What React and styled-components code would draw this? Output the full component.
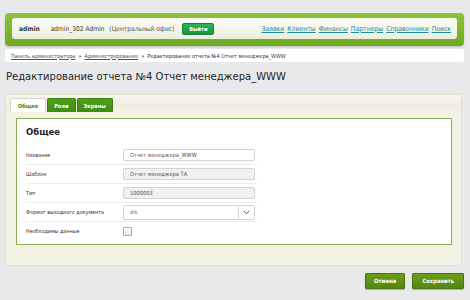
import React from 'react';
import styled, { createGlobalStyle } from 'styled-components';

const Global = createGlobalStyle`
  html, body {
    margin: 0;
    padding: 0;
    background: #e8e9eb;
    font-family: "DejaVu Sans Condensed", "DejaVu Sans", Verdana, sans-serif;
    color: #222;
  }
`;

const Page = styled.div`
  width: 470px;
  height: 300px;
  overflow: hidden;
  padding: 13px 6px 0 5px;
  box-sizing: border-box;
  background: #e8e9eb;
`;

const Header = styled.div`
  height: 33px;
  box-sizing: border-box;
  padding: 5px 7px 0 7px;
  background: linear-gradient(#8cc43a, #6fa823);
  border-radius: 4px;
  box-shadow: 0 1px 2px rgba(0, 0, 0, 0.2);
`;

const HeaderInner = styled.div`
  height: 21px;
  display: flex;
  align-items: center;
  padding: 0 6px 0 7px;
  border-radius: 3px;
  background: linear-gradient(#fdfdf8, #eaeedd);
  font-size: 6.6px;
  color: #3a3a1a;
`;

const User = styled.span`
  font-weight: bold;
  margin-right: 11px;
`;

const Office = styled.span`
  margin-left: 5px;
  color: #555;
`;

const LogoutButton = styled.button`
  margin-left: 8px;
  height: 12px;
  width: 32px;
  padding: 0;
  border: 1px solid #168238;
  border-radius: 2px;
  background: linear-gradient(#2fb457, #1b963f);
  color: #fff;
  font-family: inherit;
  font-size: 5.6px;
  font-weight: bold;
`;

const Nav = styled.nav`
  margin-left: auto;
  display: flex;
  gap: 3px;
`;

const NavLink = styled.a`
  color: #1c8c9c;
  text-decoration: underline;
  font-size: 6.8px;
`;

const Crumbs = styled.div`
  margin-top: 3px;
  height: 13px;
  display: flex;
  align-items: center;
  gap: 3px;
  padding-left: 6px;
  background: #fff;
  border-radius: 2px;
  font-size: 5.5px;
  color: #333;
`;

const Crumb = styled.a`
  color: #555;
  text-decoration: underline;
`;

const Title = styled.h1`
  margin: 9px 0 0 1px;
  height: 22px;
  font-family: "DejaVu Sans", Verdana, sans-serif;
  font-size: 10px;
  font-weight: normal;
  color: #1f1f1f;
`;

const Panel = styled.div`
  margin-top: 1px;
  width: 457px;
  height: 172px;
  box-sizing: border-box;
  background: #f3f1e3;
  border: 1px solid #e2dfca;
  border-radius: 3px;
`;

const TabBar = styled.div`
  display: flex;
  gap: 1px;
  padding: 3px 4px 0;
  height: 16px;
  box-sizing: border-box;
  background: linear-gradient(#f7f6ee 0, #efede0 70%, #f3f1e3 100%);
`;

const Tab = styled.div`
  height: 13px;
  padding: 0 ${p => (p.$active ? 7 : 6)}px;
  display: flex;
  align-items: center;
  font-size: 5.6px;
  font-weight: bold;
  border-radius: 2px 2px 0 0;
  color: ${p => (p.$active ? '#4d8a12' : '#fff')};
  background: ${p => (p.$active ? '#fff' : 'linear-gradient(#4ea11a, #3d8c10)')};
  border: 1px solid ${p => (p.$active ? '#d9d6c2' : '#3a7d0f')};
  border-bottom: none;
`;

const Content = styled.div`
  margin: 7px 9px 0 10px;
  height: 127px;
  box-sizing: border-box;
  background: #fff;
  border: 1px solid #8cad5a;
  padding: 8px 0 0 9px;
`;

const Heading = styled.h2`
  margin: 0 0 8px;
  font-family: "DejaVu Sans", Verdana, sans-serif;
  font-size: 8.5px;
  font-weight: bold;
  color: #222;
`;

const Row = styled.div`
  display: flex;
  align-items: center;
  width: 231px;
  height: 19px;
  border-top: 1px solid ${p => (p.$first ? 'transparent' : '#ececec')};
  box-sizing: border-box;
`;

const Label = styled.div`
  width: 97px;
  font-size: 5.4px;
  color: #333;
`;

const Field = styled.div`
  width: 132px;
  height: 12px;
  box-sizing: border-box;
  display: flex;
  align-items: center;
  padding-left: 6px;
  border: 1px solid #d3d3d3;
  border-radius: 2px;
  background: ${p => (p.$disabled ? '#f1f1f1' : '#fff')};
  font-size: 5.7px;
  color: #555;
`;

const Select = styled(Field)`
  height: 15px;
  padding-right: 0;
`;

const Arrow = styled.div`
  margin-left: auto;
  width: 15px;
  height: 100%;
  border-left: 1px solid #d3d3d3;
  display: flex;
  align-items: center;
  justify-content: center;
`;

const Check = styled.div`
  width: 7px;
  height: 7px;
  border: 1px solid #aaa;
  border-radius: 1px;
  background: linear-gradient(#fff, #e6e6e6);
`;

const Actions = styled.div`
  display: flex;
  justify-content: flex-end;
  gap: 7px;
  margin-top: 7px;
  width: 459px;
`;

const Button = styled.button`
  height: 16px;
  padding: 0 ${p => p.$pad}px;
  border: 1px solid #4a720c;
  border-radius: 1px;
  background: linear-gradient(#6b9c1a, #578612);
  color: #fff;
  font-family: inherit;
  font-size: 5.8px;
  font-weight: bold;
  box-shadow: 0 1px 1px rgba(0, 0, 0, 0.25);
`;

const fields = [
  { label: 'Название', value: 'Отчет менеджера_WWW' },
  { label: 'Шаблон', value: 'Отчет менеджера ТА', disabled: true },
  { label: 'Тип', value: '1000003', disabled: true },
];

export default function App() {
  return (
    <Page>
      <Global />
      <Header>
        <HeaderInner>
          <User>admin</User>
          <span>admin_302 Admin</span>
          <Office>(Центральный офис)</Office>
          <LogoutButton type="button">Выйти</LogoutButton>
          <Nav>
            {['Заявки', 'Клиенты', 'Финансы', 'Партнеры', 'Справочники', 'Поиск'].map(l => (
              <NavLink key={l}>{l}</NavLink>
            ))}
          </Nav>
        </HeaderInner>
      </Header>
      <Crumbs>
        <Crumb>Панель администратора</Crumb>
        <span>»</span>
        <Crumb>Администрирование</Crumb>
        <span>»</span>
        <span>Редактирование отчета №4 Отчет менеджера_WWW</span>
      </Crumbs>
      <Title>Редактирование отчета №4 Отчет менеджера_WWW</Title>
      <Panel>
        <TabBar>
          <Tab $active>Общее</Tab>
          <Tab>Роли</Tab>
          <Tab>Экраны</Tab>
        </TabBar>
        <Content>
          <Heading>Общее</Heading>
          {fields.map((f, i) => (
            <Row key={f.label} $first={i === 0}>
              <Label>{f.label}</Label>
              <Field $disabled={f.disabled}>{f.value}</Field>
            </Row>
          ))}
          <Row>
            <Label>Формат выходного документа</Label>
            <Select>
              xls
              <Arrow>
                <svg width="7" height="5" viewBox="0 0 7 5">
                  <path d="M0.8 1 L3.5 3.8 L6.2 1" fill="none" stroke="#555" strokeWidth="1" />
                </svg>
              </Arrow>
            </Select>
          </Row>
          <Row>
            <Label>Необходимы данные</Label>
            <Check />
          </Row>
        </Content>
      </Panel>
      <Actions>
        <Button type="button" $pad={8}>Отмена</Button>
        <Button type="button" $pad={9}>Сохранить</Button>
      </Actions>
    </Page>
  );
}
